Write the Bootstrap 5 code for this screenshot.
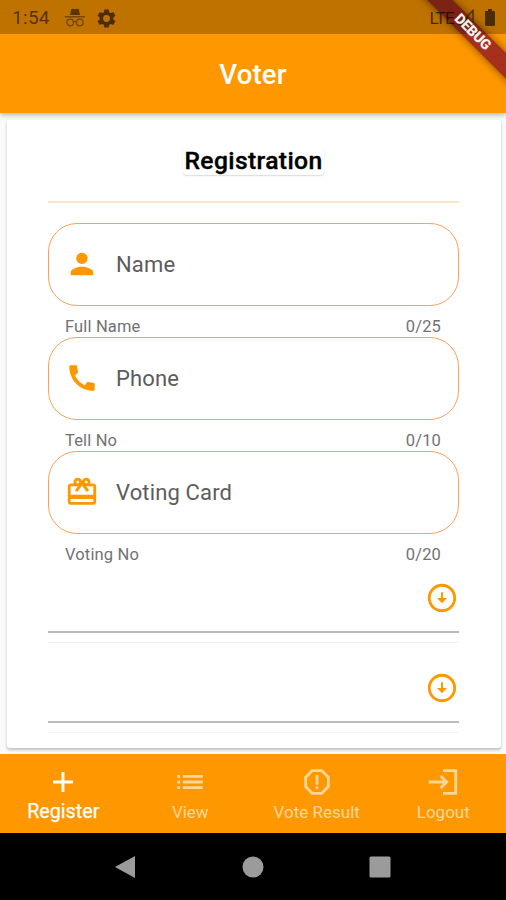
<!DOCTYPE html>
<html lang="en">
<head>
<meta charset="utf-8">
<meta name="viewport" content="width=device-width, initial-scale=1">
<title>Voter</title>
<link href="https://cdn.jsdelivr.net/npm/bootstrap@5.3.0/dist/css/bootstrap.min.css" rel="stylesheet">
<style>
  :root { --amber: #ff9800; }
  body { font-family: Roboto, "Liberation Sans", sans-serif; background: #fafafa; color: #000; line-height: 1.2; }
  .phone { width: 506px; height: 900px; }
  .app-head { background: var(--amber); height: 113px; box-shadow: 0 2px 5px rgba(0,0,0,.28); z-index: 2; }
  .status { height: 34px; background: rgba(0,0,0,.25); color: rgba(0,0,0,.58); padding: 2px 10px 0 12px; }
  .clock { font-size: 19px; letter-spacing: .3px; width: 53px; padding-top: 1px; }
  .lte { font-size: 17px; letter-spacing: -.7px; margin-right: 2px; color: rgba(0,0,0,.68); }
  .app-title { font-size: 27.5px; font-weight: 500; color: #fff; padding-top: 2px; letter-spacing: .2px; }
  .ribbon { position: absolute; left: 383px; top: 24px; width: 180px; height: 18px; transform: rotate(45deg); background: #a72f1d; box-shadow: 0 0 8px rgba(0,0,0,.5); }
  .ribbon-text { position: absolute; left: 383px; top: 24px; width: 180px; height: 18px; transform: rotate(45deg); color: #fff; font-size: 14.3px; font-weight: 900; letter-spacing: -.3px; padding-right: 2px; opacity: .93; }
  .sheet { margin: 7px 5px 6px 7px; border-radius: 3px; padding: 0 42px 0 41px; box-shadow: 0 2px 3px rgba(0,0,0,.24); }
  .sheet-title { font-size: 24.7px; font-weight: 500; -webkit-text-stroke: .35px #000; line-height: 28px; margin: 27px auto 26px; padding: 0 1px; letter-spacing: .35px; border-radius: 4px; box-shadow: 0 1px 1.5px rgba(0,0,0,.15); }
  .rule { height: 2px; background: #ffe4c2; flex: none; }
  .entry { height: 83px; border: 1.5px solid #fca05c; border-radius: 29px; padding-left: 16px; gap: 17px; font-size: 22px; color: #5c5c5c; letter-spacing: .15px; flex: none; }
  .entry span { padding-top: 2px; }
  .first { margin-top: 20px; }
  .hint { height: 31px; padding: 11px 18px 0 17px; font-size: 16.5px; color: #727272; letter-spacing: .15px; flex: none; }
  .picker { height: 68px; border-bottom: 2px solid #bcbcbc; flex: none; }
  .second { height: 80px; padding-top: 12px; }
  .faint { height: 1px; background: #f2f2f2; margin-top: 9px; flex: none; }
  .ico { width: 34px; height: 34px; fill: var(--amber); flex: none; }
  .entry .ico { margin-top: -1px; }
  .tabs { background: var(--amber); height: 79px; z-index: 2; }
  .tab-item { width: 126.5px; color: #ffd699; font-size: 17px; padding: 11px 0 0 1px; }
  .tab-item .ico { fill: currentColor; }
  .tab-item span { line-height: 26px; }
  .tab-item.current { color: #fff; font-size: 19.7px; padding-left: 0; -webkit-text-stroke: .25px #fff; }
  .tab-item.current span { line-height: 25px; }
  .sysbar { height: 67px; background: #000; }
  .sysbar svg { width: 24px; height: 24px; fill: #9b9b9b; }
  .sysbar .mid { margin: 0 103px; }
</style>
</head>
<body>
<div class="phone d-flex flex-column overflow-hidden">
  <header class="app-head position-relative flex-shrink-0 d-flex flex-column">
    <div class="position-absolute top-0 start-0 w-100 h-100 overflow-hidden">
      <div class="ribbon"></div>
    </div>
    <div class="status position-relative d-flex align-items-center">
      <span class="clock">1:54</span>
      <svg width="20" height="20" viewBox="0 0 20 20" fill="#593500"><path d="M5 7 6.200 1.500q.3-1 1.200-.8L10 1.300l2.600-.6q.9-.2 1.200.8L15 7z"/><path d="M0 8h20v1.500H0z" opacity=".7"/><g fill="none" stroke="#704600" stroke-width="1.300"><circle cx="5.200" cy="14.500" r="3.300"/><circle cx="14.800" cy="14.500" r="3.300"/><path d="M8.500 14q1.500-1 3 0"/></g></svg>
      <svg class="ms-2 ps-1" width="23" height="19" viewBox="2 2 20 20" fill="#4c2d00"><path d="M19.140 12.940c.04-.3.060-.61.060-.94s-.02-.64-.07-.94l2.030-1.580c.18-.14.230-.41.120-.61l-1.920-3.320c-.12-.22-.37-.29-.59-.22l-2.390.96c-.5-.38-1.030-.7-1.620-.94L14.400 2.810c-.04-.24-.24-.41-.48-.41h-3.840c-.24 0-.43.17-.47.410L9.250 5.350c-.59.240-1.130.570-1.620.940l-2.390-.96c-.22-.08-.47 0-.59.220L2.740 8.870c-.12.210-.08.470.120.610l2.030 1.580c-.05.300-.09.630-.09.940s.02.640.070.940l-2.030 1.580c-.18.140-.23.410-.12.610l1.920 3.320c.12.220.37.290.59.220l2.390-.96c.5.380 1.030.700 1.620.940l.36 2.540c.05.240.24.410.48.410h3.840c.24 0 .44-.17.470-.41l.36-2.540c.59-.24 1.130-.56 1.620-.94l2.390.96c.22.080.47 0 .59-.22l1.920-3.320c.12-.22.070-.47-.12-.61zM12 15.600A3.600 3.600 0 1 1 12 8.400a3.600 3.600 0 0 1 0 7.200z" fill-rule="evenodd"/></svg>
      <span class="lte ms-auto">LTE</span>
      <svg width="20" height="20" viewBox="0 0 20 20"><path d="M17 2.500v14H3z" fill="none" stroke="#4c2d00" stroke-width="1.500"/><path d="M12 7v9.500H3z" fill="#3a2208"/></svg>
      <svg class="ms-2" width="12" height="20" viewBox="0 0 12 20" fill="#4c2d00"><path d="M4 1h4v2h2q1 0 1 1v13q0 1-1 1H2q-1 0-1-1V4q0-1 1-1h2z"/></svg>
    </div>
    <div class="app-title flex-grow-1 d-flex align-items-center justify-content-center">Voter</div>
    <div class="position-absolute top-0 start-0 w-100 h-100 overflow-hidden">
      <div class="ribbon-text d-flex align-items-center justify-content-center">DEBUG</div>
    </div>
  </header>

  <main class="flex-grow-1 d-flex flex-column">
    <section class="sheet bg-white flex-grow-1 d-flex flex-column">
      <h1 class="sheet-title">Registration</h1>
      <div class="rule"></div>
      <div class="entry first d-flex align-items-center">
        <svg class="ico" viewBox="0 0 24 24"><path d="M12 12c2.210 0 4-1.790 4-4s-1.790-4-4-4-4 1.790-4 4 1.790 4 4 4zm0 2c-2.670 0-8 1.340-8 4v2h16v-2c0-2.660-5.330-4-8-4z"/></svg>
        <span>Name</span>
      </div>
      <div class="hint d-flex justify-content-between"><span>Full Name</span><span>0/25</span></div>
      <div class="entry d-flex align-items-center">
        <svg class="ico" viewBox="0 0 24 24"><path d="M20.010 15.380c-1.230 0-2.420-.2-3.530-.56-.35-.12-.74-.03-1.010.24l-1.570 1.970c-2.830-1.350-5.480-3.900-6.890-6.830l1.950-1.660c.27-.28.350-.67.240-1.020-.37-1.110-.56-2.300-.56-3.530 0-.54-.45-.99-.99-.99H4.190C3.650 3 3 3.240 3 3.990 3 13.280 10.730 21 20.010 21c.71 0 .99-.63.990-1.180v-3.450c0-.54-.45-.99-.99-.99z"/></svg>
        <span>Phone</span>
      </div>
      <div class="hint d-flex justify-content-between"><span>Tell No</span><span>0/10</span></div>
      <div class="entry d-flex align-items-center">
        <svg class="ico" viewBox="0 0 24 24"><path d="M20 6h-2.180c.11-.31.180-.65.180-1 0-1.660-1.340-3-3-3-1.050 0-1.960.54-2.500 1.350l-.5.670-.5-.68C10.960 2.540 10.050 2 9 2 7.340 2 6 3.340 6 5c0 .35.070.69.180 1H4c-1.110 0-1.990.89-1.990 2L2 19c0 1.110.89 2 2 2h16c1.110 0 2-.89 2-2V8c0-1.110-.89-2-2-2zm-5-2c.55 0 1 .45 1 1s-.45 1-1 1-1-.45-1-1 .45-1 1-1zM9 4c.55 0 1 .45 1 1s-.45 1-1 1-1-.45-1-1 .45-1 1-1zm11 15H4v-2h16v2zm0-5H4V8h5.080L7 10.830 8.620 12 11 8.760l1-1.360 1 1.360L15.380 12 17 10.830 14.920 8H20v6z"/></svg>
        <span>Voting Card</span>
      </div>
      <div class="hint d-flex justify-content-between"><span>Voting No</span><span>0/20</span></div>
      <div class="picker d-flex justify-content-end align-items-center">
        <svg class="ico" viewBox="0 0 24 24"><path d="M12 4c4.410 0 8 3.590 8 8s-3.590 8-8 8-8-3.590-8-8 3.590-8 8-8m0-2C6.480 2 2 6.480 2 12s4.480 10 10 10 10-4.480 10-10S17.520 2 12 2zm.7 10V8h-1.400v4H8.500l3.500 3.700 3.500-3.700z"/></svg>
      </div>
      <div class="faint"></div>
      <div class="picker second d-flex justify-content-end align-items-center">
        <svg class="ico" viewBox="0 0 24 24"><path d="M12 4c4.410 0 8 3.590 8 8s-3.590 8-8 8-8-3.590-8-8 3.590-8 8-8m0-2C6.480 2 2 6.480 2 12s4.480 10 10 10 10-4.480 10-10S17.520 2 12 2zm.7 10V8h-1.400v4H8.500l3.500 3.700 3.500-3.700z"/></svg>
      </div>
      <div class="faint"></div>
    </section>
  </main>

  <nav class="tabs d-flex flex-shrink-0 position-relative">
    <div class="tab-item current d-flex flex-column align-items-center">
      <svg class="ico" viewBox="0 0 24 24"><path d="M19 13h-6v6h-2v-6H5v-2h6V5h2v6h6z"/></svg><span>Register</span>
    </div>
    <div class="tab-item d-flex flex-column align-items-center">
      <svg class="ico" viewBox="0 0 24 24"><path d="M3 13h2v-2H3zm0 4h2v-2H3zm0-8h2V7H3zm4 4h14v-2H7zm0 4h14v-2H7zM7 7v2h14V7z"/></svg><span>View</span>
    </div>
    <div class="tab-item d-flex flex-column align-items-center">
      <svg class="ico" viewBox="0 0 24 24"><path d="M15.730 3H8.270L3 8.270v7.460L8.270 21h7.460L21 15.730V8.270L15.730 3zM19 14.900 14.900 19H9.100L5 14.900V9.100L9.100 5h5.800L19 9.100v5.800z"/><circle cx="12" cy="16" r="1"/><path d="M11 7h2v7h-2z"/></svg><span>Vote Result</span>
    </div>
    <div class="tab-item d-flex flex-column align-items-center">
      <svg class="ico" viewBox="0 0 24 24"><path d="M12 3h10v18H12v-2h8V5h-8z"/><path d="m11 7-1.400 1.400 2.600 2.600H2v2h10.200l-2.600 2.600L11 17l5-5z"/></svg><span>Logout</span>
    </div>
  </nav>
  <footer class="sysbar d-flex flex-shrink-0 justify-content-center align-items-center">
    <svg viewBox="0 0 24 24"><path d="M21 1v22L1 12z"/></svg>
    <svg class="mid" viewBox="0 0 24 24"><circle cx="12" cy="12" r="10.500"/></svg>
    <svg viewBox="0 0 24 24"><rect x="1.500" y="1.500" width="21" height="21" rx="1.500"/></svg>
  </footer>
</div>
<script src="https://cdn.jsdelivr.net/npm/bootstrap@5.3.0/dist/js/bootstrap.bundle.min.js"></script>
</body>
</html>
